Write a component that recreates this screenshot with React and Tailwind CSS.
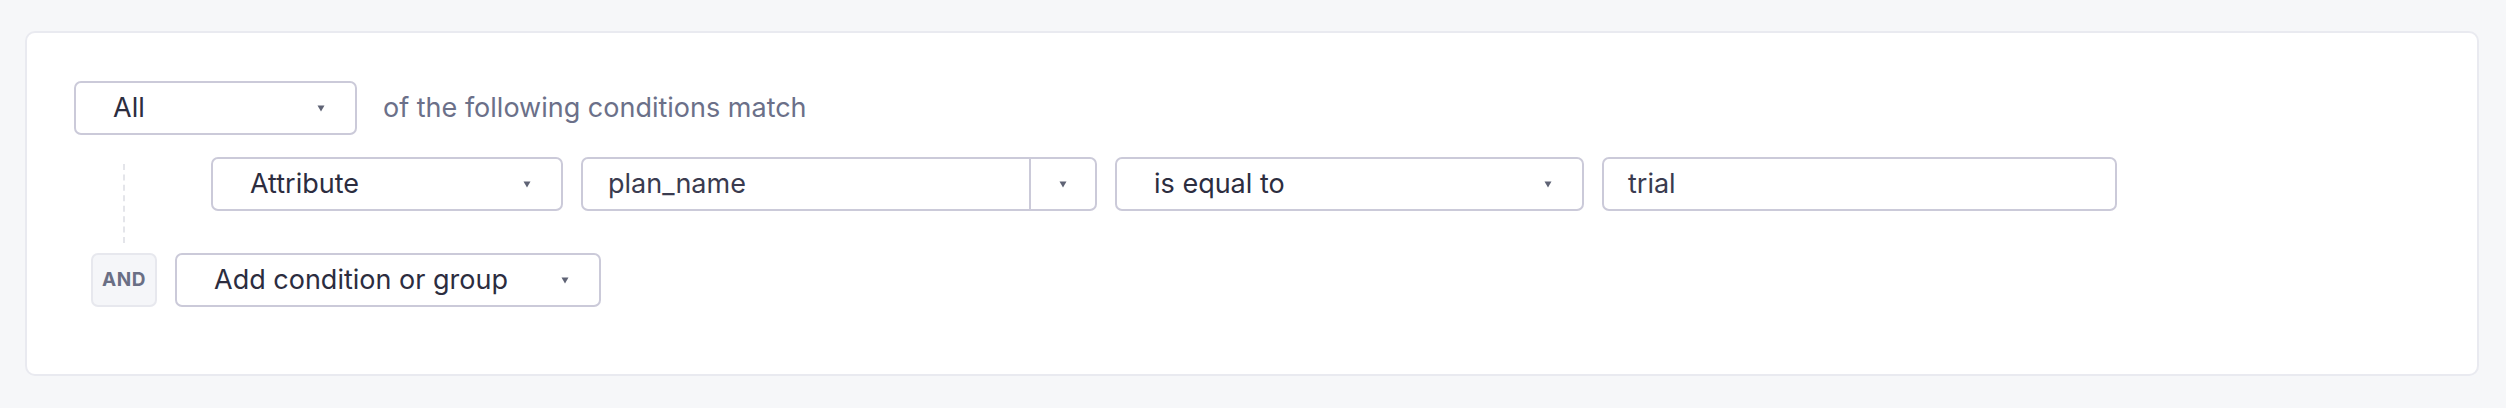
import React from 'react';

const Caret = () => (
  <svg width="8" height="7" viewBox="0 0 8 7" className="shrink-0">
    <path d="M0.5 0.5 H7.5 L4 6.5 Z" fill="#5f6375" />
  </svg>
);

const Select = ({ label, width }) => (
  <div
    className={`${width} h-[54px] shrink-0 flex items-center justify-between pl-[37px] pr-[30px] bg-white border-2 border-[#cbcad9] rounded-[7px] text-[27px] text-[#2c2d3f]`}
  >
    <span>{label}</span>
    <Caret />
  </div>
);

const App = () => {
  return (
    <div
      className="w-[2506px] h-[408px] bg-[#f6f7f9] pt-[31px] px-[25px]"
      style={{ fontFamily: 'Inter, "Noto Sans", sans-serif' }}
    >
      <div className="w-[2454px] h-[345px] bg-white border-2 border-[#e9eaf0] rounded-[10px] pl-[47px] pt-[48px]">
        {/* match row */}
        <div className="flex items-center gap-[26px]">
          <Select label="All" width="w-[283px]" />
          <span className="text-[27px] text-[#6b7089]">of the following conditions match</span>
        </div>

        {/* condition row */}
        <div className="flex mt-[22px]">
          <div className="ml-[17px] w-[66px] flex justify-center pt-[7px] pb-[10px]">
            <div className="border-l-2 border-dashed border-[#e4e5ea]" />
          </div>
          <div className="ml-[54px] pb-[42px] flex gap-[18px]">
            <Select label="Attribute" width="w-[352px]" />
            <div className="w-[516px] h-[54px] flex bg-white border-2 border-[#cbcad9] rounded-[7px] text-[27px] text-[#3a3b4f]">
              <div className="flex-1 flex items-center pl-[25px]">plan_name</div>
              <div className="w-[66px] border-l-2 border-[#cbcad9] flex items-center justify-center">
                <Caret />
              </div>
            </div>
            <Select label="is equal to" width="w-[469px]" />
            <div className="w-[515px] h-[54px] flex items-center pl-[24px] bg-white border-2 border-[#cbcad9] rounded-[7px] text-[27px] text-[#3a3b4f]">
              trial
            </div>
          </div>
        </div>

        {/* add row */}
        <div className="ml-[17px] flex items-center gap-[18px]">
          <div className="w-[66px] h-[54px] flex items-center justify-center bg-[#f5f6f9] border-2 border-[#e7e8ee] rounded-[7px] text-[19px] font-bold tracking-[0.5px] text-[#6a6f85]">
            AND
          </div>
          <Select label="Add condition or group" width="w-[426px]" />
        </div>
      </div>
    </div>
  );
};

export default App;
